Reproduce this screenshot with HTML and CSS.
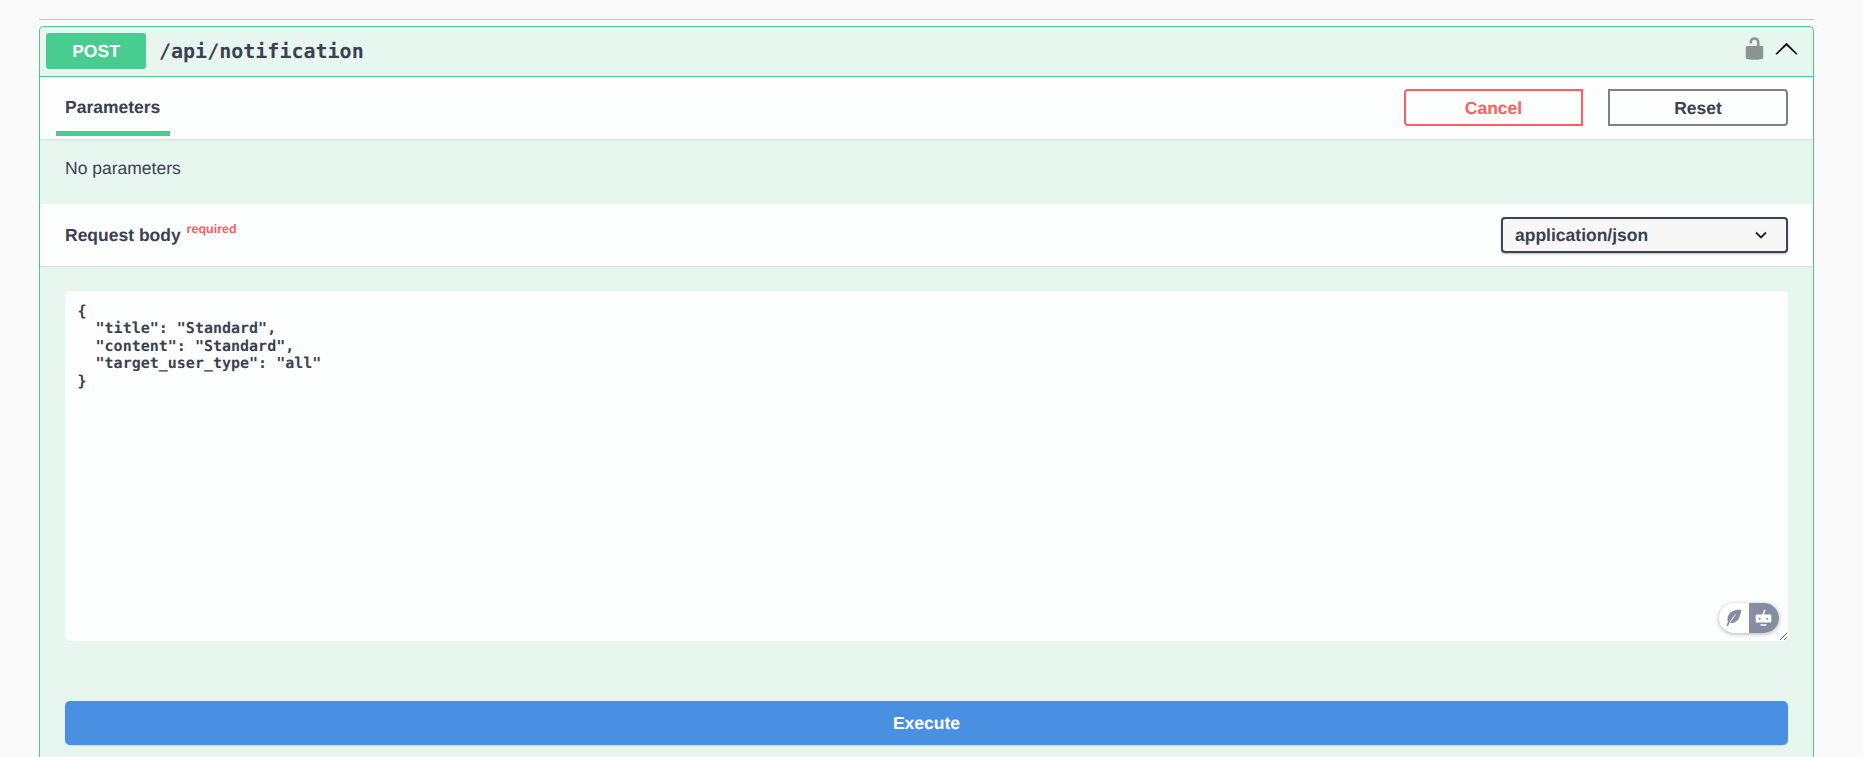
FILE: index.html
```html
<!DOCTYPE html>
<html lang="en">
<head>
<meta charset="utf-8">
<title>POST /api/notification</title>
<link rel="stylesheet" href="styles.css">
</head>
<body>
<div class="page">
  <hr class="rule">
  <section class="opblock">
    <header class="summary">
      <span class="method">POST</span>
      <span class="path">/api/notification</span>
      <span class="summary-icons">
        <svg class="lock" viewBox="0 0 20 20" aria-hidden="true"><path d="M15.800 8H14V5.600C14 2.703 12.665 1 10 1 7.334 1 6 2.703 6 5.600V6h2v-.801C8 3.754 8.797 3 10 3c1.203 0 2 .754 2 2.199V8H4c-.553 0-1 .646-1 1.199V17c0 .549.428 1.139.951 1.307l1.197.387C5.672 18.861 6.550 19 7.100 19h5.800c.549 0 1.428-.139 1.951-.307l1.196-.387c.524-.167.953-.757.953-1.306V9.199C17 8.646 16.352 8 15.800 8z"/></svg>
        <svg class="chevron" viewBox="0 0 20 20" aria-hidden="true"><path transform="rotate(-90 10 10)" d="M13.250 10 6.109 2.580c-.268-.27-.268-.707 0-.979.268-.27.701-.27.969 0l7.830 7.908c.268.271.268.709 0 .979l-7.830 7.908c-.268.271-.701.27-.969 0-.268-.269-.268-.707 0-.979L13.250 10z"/></svg>
      </span>
    </header>
    <div class="tabs-bar">
      <div class="tab">Parameters</div>
      <div class="actions">
        <button class="btn cancel">Cancel</button>
        <button class="btn reset">Reset</button>
      </div>
    </div>
    <div class="no-params">No parameters</div>
    <div class="body-bar">
      <div class="body-title">Request body <sup class="required">required</sup></div>
      <div class="select">
        <span>application/json</span>
        <svg class="select-arrow" viewBox="0 0 12 8" aria-hidden="true"><path d="M1 1.500 6 6.500l5-5"/></svg>
      </div>
    </div>
    <div class="editor-area">
      <div class="editor">
        <textarea class="code" spellcheck="false">{
  "title": "Standard",
  "content": "Standard",
  "target_user_type": "all"
}</textarea>
        <div class="toggle">
          <span class="toggle-part">
            <svg viewBox="0 0 30 30" aria-hidden="true"><path class="feather" d="M22.300 6.800C17 6.200 10.500 8 8.800 13.800c-.6 2-.3 4 .2 5.300L7.400 22.400l1.500.7 1.700-3.200c3.600.6 8.300-1 9.900-5.900.9-2.800 2.200-5 1.800-8.200z"/><path class="vein" d="M10.600 19.700 16.300 11.600"/></svg>
          </span>
          <span class="toggle-part active">
            <svg viewBox="0 0 30 30" aria-hidden="true"><rect class="robot" x="6.700" y="11.600" width="15.600" height="8" rx="1"/><path class="antenna" d="M13.900 12 15.900 6.700"/><rect class="robot" x="11.500" y="21.200" width="6" height="1.500"/><circle class="eye" cx="10.700" cy="15.800" r="1"/><circle class="eye" cx="18.300" cy="15.800" r="1"/></svg>
          </span>
        </div>
      </div>
      <button class="execute">Execute</button>
    </div>
  </section>
</div>
</body>
</html>
```
FILE: styles.css
```css
* { box-sizing: border-box; }
html, body { margin: 0; height: 757px; overflow: hidden; background: #fafafa; }
body { font-family: "Liberation Sans", Arial, sans-serif; color: #3b4151; text-rendering: geometricPrecision; }
.page { padding: 19px 49px 0 39px; }
.rule { margin: 0 0 6px; border: 0; height: 1px; background: #c4c4c4; }
.opblock { height: 760px; border: 1px solid #49cc90; border-bottom: 0; border-radius: 5px 5px 0 0; background: #e8f6f0; display: flex; flex-direction: column; }
.summary { height: 50px; flex: none; padding: 6px 6px 0 6px; display: flex; align-items: flex-start; border-bottom: 1px solid #49cc90; }
.method { width: 100px; height: 36px; background: #49cc90; border-radius: 3px; color: #fff; font-weight: 700; font-size: 17.5px; display: flex; align-items: center; justify-content: center; }
.path { margin-left: 13px; font: 600 20px/36px "DejaVu Sans Mono", monospace; color: #3b4151; }
.summary-icons { margin-left: auto; display: flex; align-items: flex-start; }
.lock { width: 25px; height: 25px; margin-top: 2.500px; fill: #8b9490; }
.chevron { width: 25px; height: 25px; margin: 3.800px 8px 0 7px; fill: #111; }
.tabs-bar { height: 62px; flex: none; background: rgba(255,255,255,.85); box-shadow: 0 1px 2px rgba(0,0,0,.1); display: flex; justify-content: space-between; padding: 12px 25px 0 13px; position: relative; }
.tab { width: 114px; height: 47px; padding: 8px 0 0 9px; font-size: 17.5px; font-weight: 700; line-height: 20px; border-bottom: 5px solid #49cc90; margin-left: 3px; }
.actions { display: flex; gap: 25px; }
.btn { width: 180px; height: 37px; background: transparent; font: 700 17.5px "Liberation Sans", Arial, sans-serif; text-rendering: geometricPrecision; border: 2px solid; padding: 1px 0 0; }
.cancel { width: 179px; color: #ff5f5f; border-color: #ff5f5f; border-radius: 4px 0 0 4px; }
.reset { color: #3b4151; border-color: #808080; border-radius: 0 4px 4px 0; }
.no-params { height: 65px; flex: none; padding: 16px 0 0 25px; font-size: 17.5px; line-height: 26px; }
.body-bar { height: 62px; flex: none; background: rgba(255,255,255,.85); box-shadow: 0 1px 2px rgba(0,0,0,.1); display: flex; justify-content: space-between; align-items: center; padding: 0 25px; position: relative; }
.body-title { font-size: 17.5px; font-weight: 700; }
.required { color: #ff5f5f; font-size: 12.5px; font-weight: 700; position: relative; top: -8px; vertical-align: baseline; margin-left: 1px; line-height: 1; }
.select { width: 287px; height: 36px; background: #f7f7f7; border: 2px solid #41444e; border-radius: 4px; box-shadow: 0 1px 2px 0 rgba(0,0,0,.25); display: flex; align-items: center; justify-content: space-between; padding: 0 19px 0 12px; font-size: 17.5px; font-weight: 700; }
.select-arrow { width: 12px; height: 8px; fill: none; stroke: #222; stroke-width: 1.800; }
.editor-area { padding: 25px 25px 0; flex: 1; }
.editor { position: relative; height: 350px; }
.code { display: block; width: 100%; height: 100%; border: 0; outline: 0; margin: 0; padding: 12px 12.5px; background: rgba(255,255,255,.85); border-radius: 5px; color: #3b4151; font: 600 15px/17.45px "DejaVu Sans Mono", monospace; text-rendering: geometricPrecision; resize: vertical; }
.toggle { position: absolute; right: 9px; bottom: 8px; width: 60px; height: 30px; border-radius: 15px; display: flex; overflow: hidden; background: #fff; box-shadow: 0 1px 4px rgba(0,0,0,.3); }
.toggle-part { width: 30px; height: 30px; }
.toggle-part svg { display: block; width: 30px; height: 30px; }
.toggle-part.active { background: #858da3; }
.feather { fill: #858da3; }
.vein { fill: none; stroke: #fff; stroke-width: 1; }
.robot { fill: #fff; }
.antenna { fill: none; stroke: #fff; stroke-width: 1.500; }
.eye { fill: #858da3; }
.execute { display: block; width: 100%; height: 44px; margin-top: 60px; border: 0; border-radius: 5px; background: #4a90e2; color: #fff; font: 700 17.5px "Liberation Sans", Arial, sans-serif; text-rendering: geometricPrecision; box-shadow: 0 1px 2px rgba(0,0,0,.1); }
```
